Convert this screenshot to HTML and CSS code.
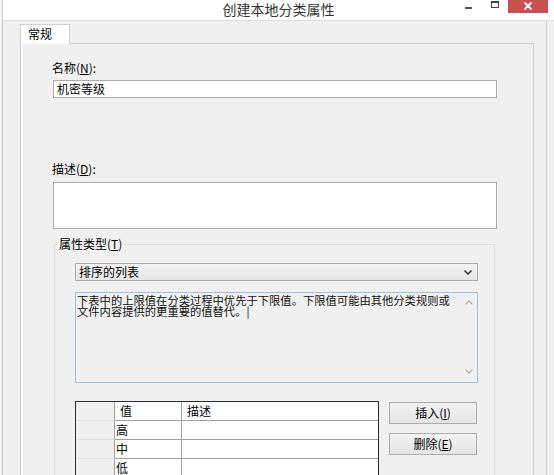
FILE: index.html
```html
<!DOCTYPE html>
<html lang="zh-CN">
<head>
<meta charset="utf-8">
<title>创建本地分类属性</title>
<link rel="stylesheet" href="styles.css">
</head>
<body>
<div class="window">
  <div class="titlebar">
    <div class="tb-side"></div>
    <div class="title">创建本地分类属性</div>
    <div class="controls">
      <div class="ctl"><svg width="26" height="13" viewBox="0 0 26 13"><rect x="9" y="7" width="7" height="2" fill="#555"/></svg></div>
      <div class="ctl"><svg width="26" height="13" viewBox="0 0 26 13"><rect x="9.5" y="1.5" width="7" height="6" fill="none" stroke="#444" stroke-width="1"/><rect x="9" y="1" width="8" height="2" fill="#444"/></svg></div>
      <div class="ctl close"><svg width="40" height="13" viewBox="0 0 40 13"><path d="M16.5 2.5 L23.5 9.5 M23.5 2.5 L16.5 9.5" stroke="#fff" stroke-width="1.8" fill="none"/></svg></div>
    </div>
  </div>
  <div class="client">
    <div class="tabstrip">
      <div class="tab">常规</div>
      <div class="tab-fill"></div>
    </div>
    <div class="panel">
      <div class="label">名称(<u>N</u>):</div>
      <div class="field">机密等级</div>
      <div class="label label-desc">描述(<u>D</u>):</div>
      <div class="field area"></div>
      <fieldset class="group">
        <legend>属性类型(<u>T</u>)</legend>
        <div class="combo">
          <span>排序的列表</span>
          <svg class="chev" width="8" height="5" viewBox="0 0 8 5"><path d="M0.5 0.5 L4 4 L7.5 0.5" stroke="#333" stroke-width="1.5" fill="none"/></svg>
        </div>
        <div class="info">
          <div class="info-text">下表中的上限值在分类过程中优先于下限值。下限值可能由其他分类规则或文件内容提供的更重要的值替代。|</div>
          <div class="info-scroll">
            <svg width="8" height="5" viewBox="0 0 8 5"><path d="M0.5 4.5 L4 1 L7.5 4.5" stroke="#b5b5b5" stroke-width="1.3" fill="none"/></svg>
            <svg width="8" height="5" viewBox="0 0 8 5"><path d="M0.5 0.5 L4 4 L7.5 0.5" stroke="#b5b5b5" stroke-width="1.3" fill="none"/></svg>
          </div>
        </div>
        <div class="table-row">
          <table class="grid">
            <thead>
              <tr><th class="rh"></th><th class="c-val">值</th><th class="c-desc">描述</th></tr>
            </thead>
            <tbody>
              <tr><td class="rh"></td><td>高</td><td></td></tr>
              <tr><td class="rh"></td><td>中</td><td></td></tr>
              <tr><td class="rh"></td><td>低</td><td></td></tr>
              <tr><td class="rh"></td><td></td><td></td></tr>
            </tbody>
          </table>
          <div class="buttons">
            <div class="btn">插入(<u>I</u>)</div>
            <div class="btn">删除(<u>E</u>)</div>
          </div>
        </div>
      </fieldset>
    </div>
  </div>
</div>
</body>
</html>
```
FILE: styles.css
```css
html, body {
  margin: 0;
  padding: 0;
}
body {
  background: #f4f4f4;
  font-family: "Noto Sans CJK SC", "Liberation Sans", sans-serif;
  font-size: 12px;
  color: #000;
  width: 554px;
  height: 475px;
  overflow: hidden;
}
.window {
  margin-left: 2px;
  border-left: 1px solid #c6c6c6;
  width: 551px;
  height: 475px;
  overflow: hidden;
  background: #f0f0f0;
}
.titlebar {
  height: 20px;
  background: #fff;
  border-bottom: 1px solid #dcdcdc;
  display: grid;
  grid-template-columns: 1fr auto 1fr;
  align-items: start;
}
.title {
  font-size: 14px;
  line-height: 18px;
  color: #333;
}
.controls {
  justify-self: end;
  display: flex;
  margin-right: 6px;
}
.ctl {
  height: 13px;
}
.ctl svg {
  display: block;
}
.close {
  background: #c75050;
}
.client {
  box-sizing: border-box;
  width: 544px;
  height: 454px;
  border-right: 1px solid #cfcfcf;
  padding: 3px 12px 0 17px;
}
.tabstrip {
  display: flex;
  height: 20px;
}
.tab {
  box-sizing: border-box;
  width: 50px;
  height: 20px;
  border: 1px solid #cfcfcf;
  border-bottom: none;
  background: #fff;
  padding-left: 7px;
  line-height: 18px;
}
.tab-fill {
  flex: 1;
  border-bottom: 1px solid #cfcfcf;
}
.panel {
  border: 1px solid #cfcfcf;
  border-top: none;
  height: 500px;
  padding: 17px 0 0 31px;
  box-shadow: inset 2px 0 0 #fafafa;
}
.label {
  line-height: 14px;
}
.label-desc {
  margin-top: 64px;
}
.field {
  box-sizing: border-box;
  margin: 5px 0 0 1px;
  width: 444px;
  height: 18px;
  border: 1px solid #acacac;
  background: #fff;
  padding-left: 3px;
  line-height: 16px;
}
.field.area {
  margin-top: 6px;
  height: 47px;
}
.group {
  box-sizing: border-box;
  margin: 8px 0 0 2px;
  width: 441px;
  min-width: 0;
  border: 1px solid #dedede;
  padding: 0 16px 0 20px;
  height: 400px;
}
.group legend {
  padding: 0 2px;
  margin-left: -18px;
  line-height: 14px;
}
.combo {
  box-sizing: border-box;
  margin-top: 12px;
  height: 18px;
  border: 1px solid #acacac;
  background: linear-gradient(#f3f3f3, #e5e5e5);
  display: flex;
  align-items: center;
  padding-left: 3px;
  line-height: 16px;
}
.chev {
  margin-left: auto;
  margin-right: 5px;
}
.info {
  box-sizing: border-box;
  margin-top: 11px;
  height: 91px;
  border: 1px solid #9dbfe2;
  background: #f0f0f0;
  display: flex;
}
.info-text {
  flex: 1;
  padding: 2px 0 0 1px;
  font-size: 11.3px;
  line-height: 11px;
  color: #111;
}
.info-scroll {
  width: 17px;
  display: flex;
  flex-direction: column;
  justify-content: space-between;
  align-items: center;
  padding: 7px 0 8px;
}
.info-scroll svg {
  display: block;
}
.table-row {
  margin-top: 18px;
  display: flex;
  align-items: flex-start;
  gap: 10px;
}
.grid {
  width: 304px;
  table-layout: fixed;
  border: 1px solid #2b2b2b;
  border-spacing: 0;
  background: #fff;
  font-size: 12px;
}
.grid th, .grid td {
  padding: 0 0 0 1px;
  line-height: 18px;
  border-bottom: 1px solid #a0a0a0;
  border-right: 1px solid #a0a0a0;
  text-align: left;
  font-weight: normal;
  box-sizing: border-box;
}
.grid th:last-child, .grid td:last-child {
  border-right: none;
}
.grid .rh {
  width: 39px;
  background: #f0f0f0;
  border-bottom-color: #e2e2e2;
}
.grid .c-val {
  width: 67px;
  padding-left: 5px;
}
.grid .c-desc {
  padding-left: 5px;
}
.buttons {
  margin-top: 1px;
  width: 88px;
  display: flex;
  flex-direction: column;
  gap: 9px;
}
.btn {
  box-sizing: border-box;
  height: 22px;
  border: 1px solid #acacac;
  background: linear-gradient(#f2f2f2, #e4e4e4);
  text-align: center;
  line-height: 20px;
}
```
